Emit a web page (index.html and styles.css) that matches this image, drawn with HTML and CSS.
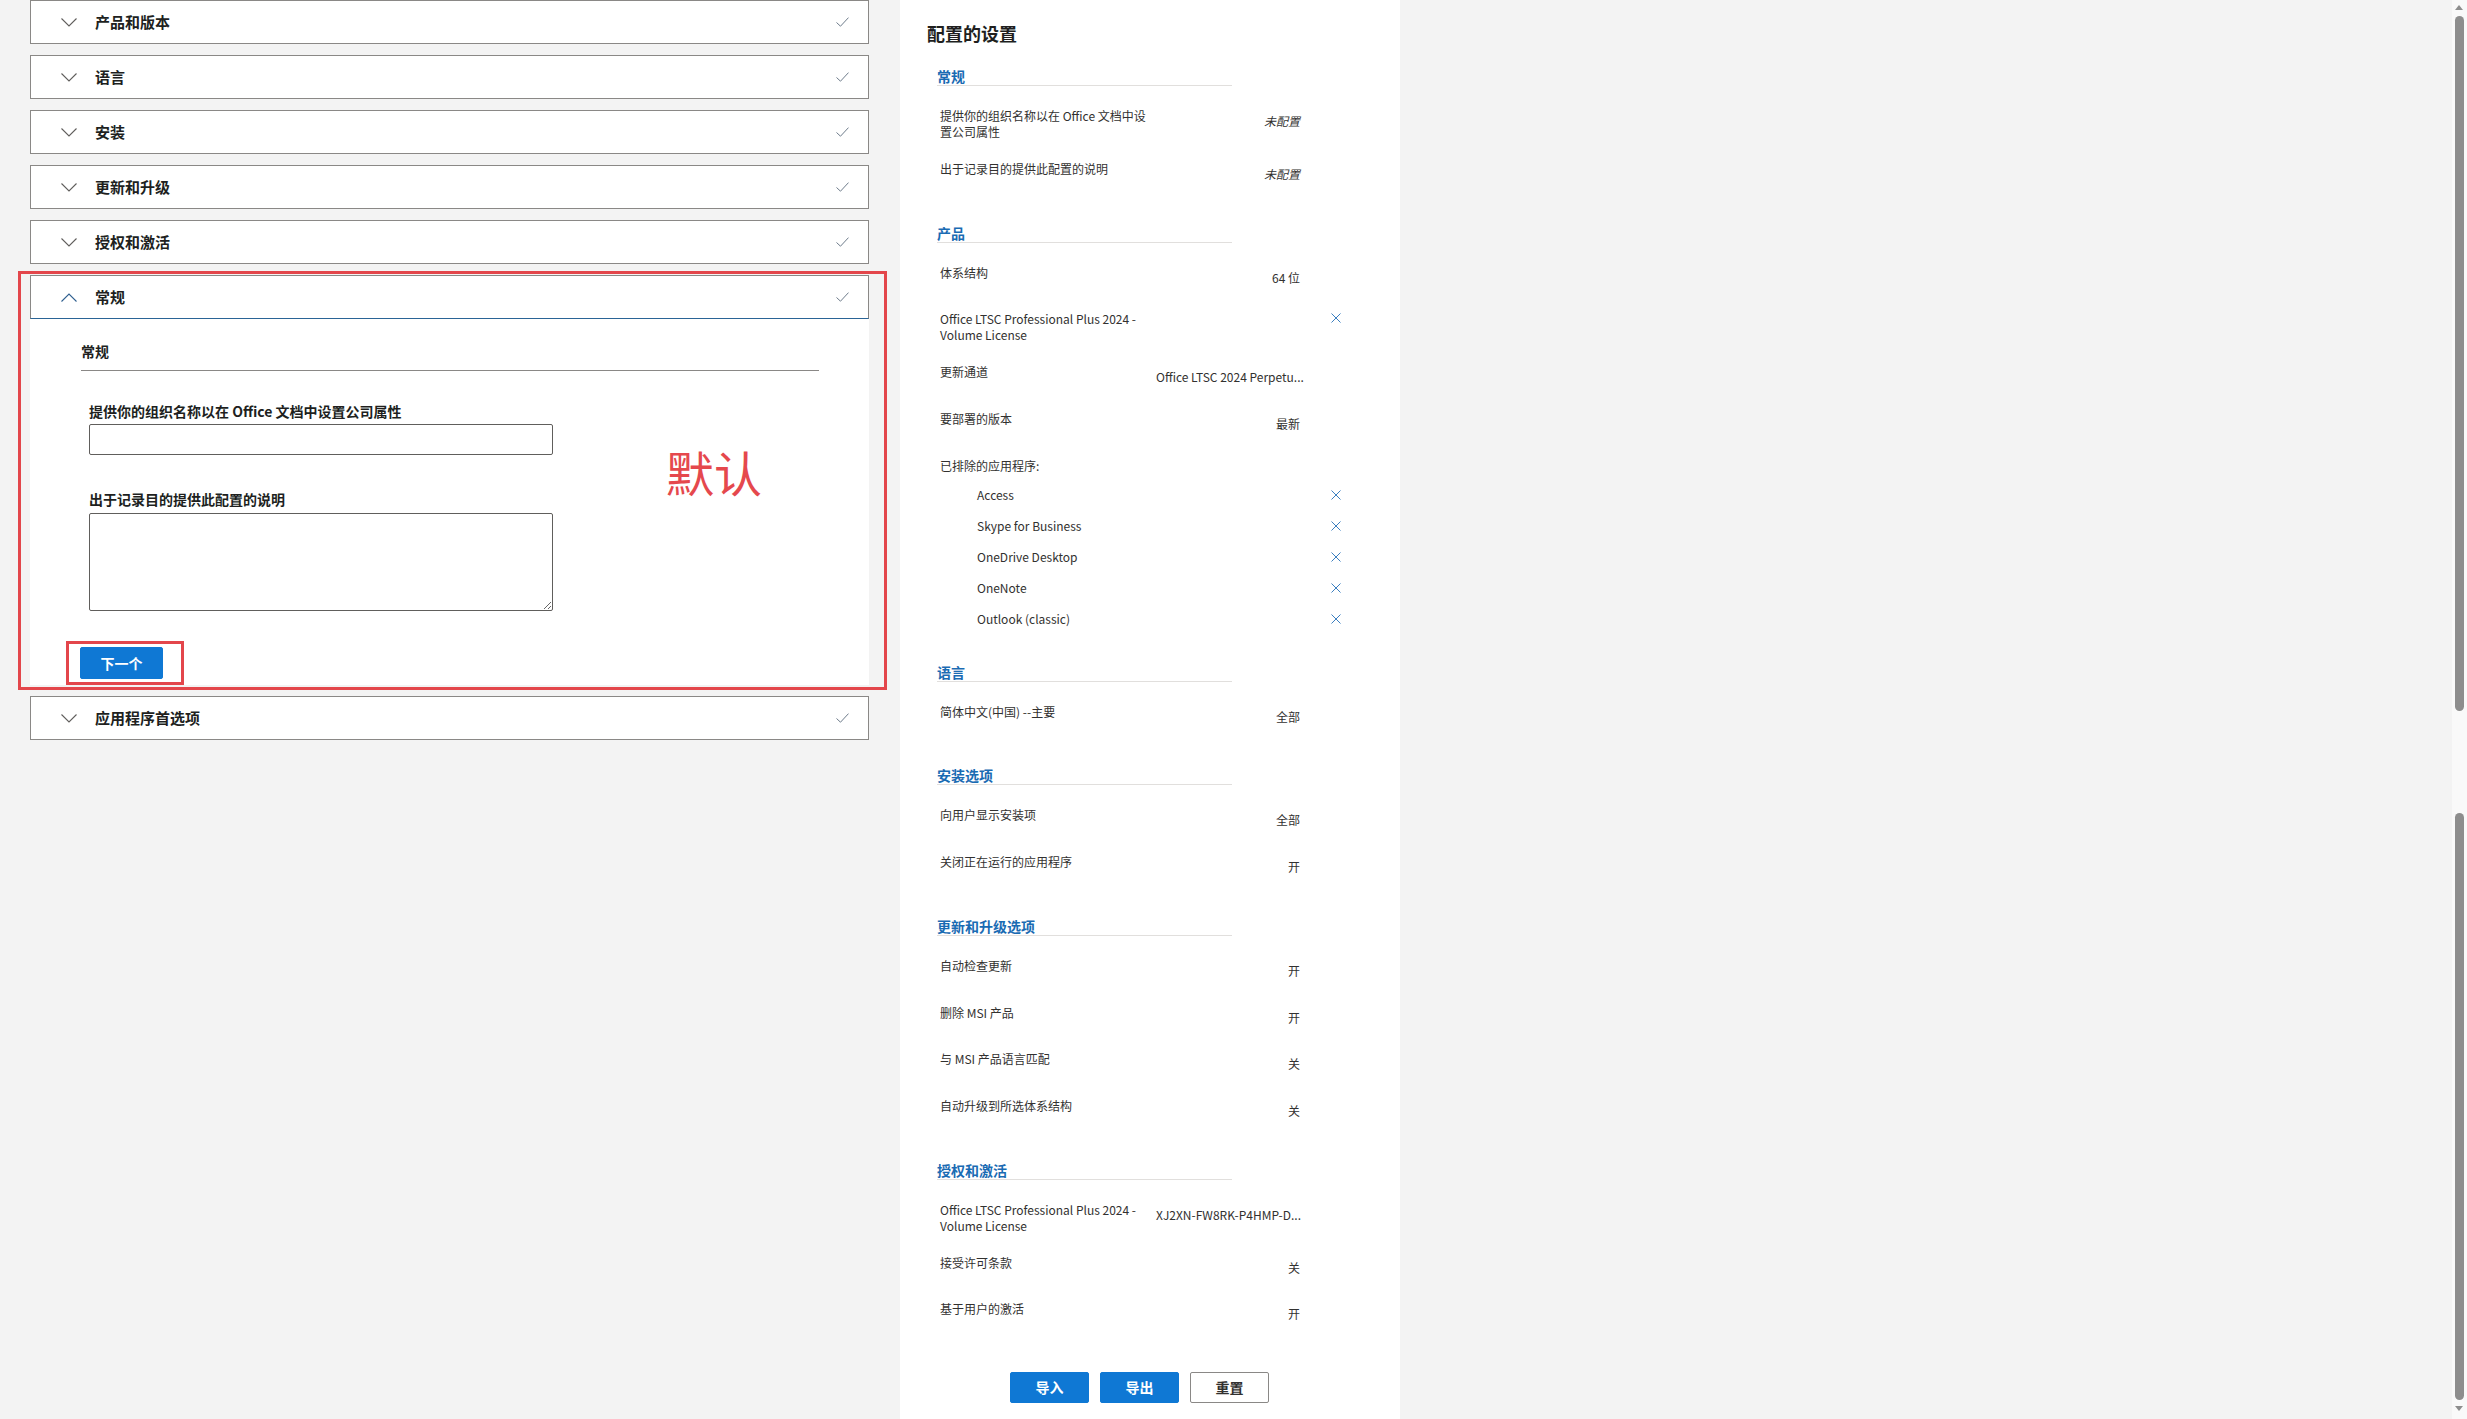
FILE: index.html
```html
<!DOCTYPE html>
<html lang="zh-CN">
<head>
<meta charset="utf-8">
<title>Office 自定义工具</title>
<link rel="stylesheet" href="styles.css">
</head>
<body>
<div class="page">
  <main class="wizard">
    <section class="acc">
      <div class="acc-head">
        <svg class="chev" width="16" height="9" viewBox="0 0 16 9"><path d="M0.5 0.5 L8 8 L15.5 0.5" fill="none" stroke="#605e5c" stroke-width="1.1"/></svg>
        <span class="acc-label">产品和版本</span>
        <svg class="check" width="13" height="10" viewBox="0 0 13 10"><path d="M0.5 5.5 L4.5 9.2 L12.5 0.6" fill="none" stroke="#6d7b8a" stroke-width="1"/></svg>
      </div>
    </section>
    <section class="acc">
      <div class="acc-head">
        <svg class="chev" width="16" height="9" viewBox="0 0 16 9"><path d="M0.5 0.5 L8 8 L15.5 0.5" fill="none" stroke="#605e5c" stroke-width="1.1"/></svg>
        <span class="acc-label">语言</span>
        <svg class="check" width="13" height="10" viewBox="0 0 13 10"><path d="M0.5 5.5 L4.5 9.2 L12.5 0.6" fill="none" stroke="#6d7b8a" stroke-width="1"/></svg>
      </div>
    </section>
    <section class="acc">
      <div class="acc-head">
        <svg class="chev" width="16" height="9" viewBox="0 0 16 9"><path d="M0.5 0.5 L8 8 L15.5 0.5" fill="none" stroke="#605e5c" stroke-width="1.1"/></svg>
        <span class="acc-label">安装</span>
        <svg class="check" width="13" height="10" viewBox="0 0 13 10"><path d="M0.5 5.5 L4.5 9.2 L12.5 0.6" fill="none" stroke="#6d7b8a" stroke-width="1"/></svg>
      </div>
    </section>
    <section class="acc">
      <div class="acc-head">
        <svg class="chev" width="16" height="9" viewBox="0 0 16 9"><path d="M0.5 0.5 L8 8 L15.5 0.5" fill="none" stroke="#605e5c" stroke-width="1.1"/></svg>
        <span class="acc-label">更新和升级</span>
        <svg class="check" width="13" height="10" viewBox="0 0 13 10"><path d="M0.5 5.5 L4.5 9.2 L12.5 0.6" fill="none" stroke="#6d7b8a" stroke-width="1"/></svg>
      </div>
    </section>
    <section class="acc">
      <div class="acc-head">
        <svg class="chev" width="16" height="9" viewBox="0 0 16 9"><path d="M0.5 0.5 L8 8 L15.5 0.5" fill="none" stroke="#605e5c" stroke-width="1.1"/></svg>
        <span class="acc-label">授权和激活</span>
        <svg class="check" width="13" height="10" viewBox="0 0 13 10"><path d="M0.5 5.5 L4.5 9.2 L12.5 0.6" fill="none" stroke="#6d7b8a" stroke-width="1"/></svg>
      </div>
    </section>
    <section class="acc open">
      <div class="acc-head">
        <svg class="chev" width="16" height="9" viewBox="0 0 16 9"><path d="M0.5 8.5 L8 1 L15.5 8.5" fill="none" stroke="#2f5f8f" stroke-width="1.1"/></svg>
        <span class="acc-label">常规</span>
        <svg class="check" width="13" height="10" viewBox="0 0 13 10"><path d="M0.5 5.5 L4.5 9.2 L12.5 0.6" fill="none" stroke="#6d7b8a" stroke-width="1"/></svg>
      </div>
      <div class="acc-body">
        <h3 class="body-title">常规</h3>
        <div class="field">
          <label class="field-label first">提供你的组织名称以在 Office 文档中设置公司属性</label>
          <input class="text-input" type="text">
        </div>
        <div class="field">
          <label class="field-label">出于记录目的提供此配置的说明</label>
          <textarea class="text-area"></textarea>
        </div>
        <button class="btn primary next">下一个</button>
      </div>
    </section>
    <section class="acc">
      <div class="acc-head">
        <svg class="chev" width="16" height="9" viewBox="0 0 16 9"><path d="M0.5 0.5 L8 8 L15.5 0.5" fill="none" stroke="#605e5c" stroke-width="1.1"/></svg>
        <span class="acc-label">应用程序首选项</span>
        <svg class="check" width="13" height="10" viewBox="0 0 13 10"><path d="M0.5 5.5 L4.5 9.2 L12.5 0.6" fill="none" stroke="#6d7b8a" stroke-width="1"/></svg>
      </div>
    </section>
  </main>

  <aside class="summary">
    <h2 class="summary-title">配置的设置</h2>

    <div class="sec first">
      <div class="sec-head">常规</div>
      <div class="row two"><span class="lbl">提供你的组织名称以在 Office 文档中设置公司属性</span><span class="val em">未配置</span></div>
      <div class="row"><span class="lbl">出于记录目的提供此配置的说明</span><span class="val em">未配置</span></div>
    </div>

    <div class="sec">
      <div class="sec-head">产品</div>
      <div class="row"><span class="lbl">体系结构</span><span class="val">64 位</span></div>
      <div class="row two"><span class="lbl">Office LTSC Professional Plus 2024 - Volume License</span><span class="val"></span><span class="x"><svg width="10" height="10" viewBox="0 0 10 10"><path d="M0.5 0.5 L9.5 9.5 M9.5 0.5 L0.5 9.5" stroke="#3b7fc0" stroke-width="1"/></svg></span></div>
      <div class="row"><span class="lbl">更新通道</span><span class="val">Office LTSC 2024 Perpetu...</span></div>
      <div class="row"><span class="lbl">要部署的版本</span><span class="val">最新</span></div>
      <div class="row subhead"><span class="lbl">已排除的应用程序:</span></div>
      <div class="items">
        <div class="row item"><span class="lbl">Access</span><span class="val"></span><span class="x"><svg width="10" height="10" viewBox="0 0 10 10"><path d="M0.5 0.5 L9.5 9.5 M9.5 0.5 L0.5 9.5" stroke="#3b7fc0" stroke-width="1"/></svg></span></div>
        <div class="row item"><span class="lbl">Skype for Business</span><span class="val"></span><span class="x"><svg width="10" height="10" viewBox="0 0 10 10"><path d="M0.5 0.5 L9.5 9.5 M9.5 0.5 L0.5 9.5" stroke="#3b7fc0" stroke-width="1"/></svg></span></div>
        <div class="row item"><span class="lbl">OneDrive Desktop</span><span class="val"></span><span class="x"><svg width="10" height="10" viewBox="0 0 10 10"><path d="M0.5 0.5 L9.5 9.5 M9.5 0.5 L0.5 9.5" stroke="#3b7fc0" stroke-width="1"/></svg></span></div>
        <div class="row item"><span class="lbl">OneNote</span><span class="val"></span><span class="x"><svg width="10" height="10" viewBox="0 0 10 10"><path d="M0.5 0.5 L9.5 9.5 M9.5 0.5 L0.5 9.5" stroke="#3b7fc0" stroke-width="1"/></svg></span></div>
        <div class="row item"><span class="lbl">Outlook (classic)</span><span class="val"></span><span class="x"><svg width="10" height="10" viewBox="0 0 10 10"><path d="M0.5 0.5 L9.5 9.5 M9.5 0.5 L0.5 9.5" stroke="#3b7fc0" stroke-width="1"/></svg></span></div>
      </div>
    </div>

    <div class="sec">
      <div class="sec-head">语言</div>
      <div class="row"><span class="lbl">简体中文(中国) --主要</span><span class="val">全部</span></div>
    </div>

    <div class="sec">
      <div class="sec-head">安装选项</div>
      <div class="row"><span class="lbl">向用户显示安装项</span><span class="val">全部</span></div>
      <div class="row"><span class="lbl">关闭正在运行的应用程序</span><span class="val">开</span></div>
    </div>

    <div class="sec">
      <div class="sec-head">更新和升级选项</div>
      <div class="row"><span class="lbl">自动检查更新</span><span class="val">开</span></div>
      <div class="row"><span class="lbl">删除 MSI 产品</span><span class="val">开</span></div>
      <div class="row"><span class="lbl">与 MSI 产品语言匹配</span><span class="val">关</span></div>
      <div class="row"><span class="lbl">自动升级到所选体系结构</span><span class="val">关</span></div>
    </div>

    <div class="sec">
      <div class="sec-head">授权和激活</div>
      <div class="row two"><span class="lbl">Office LTSC Professional Plus 2024 - Volume License</span><span class="val">XJ2XN-FW8RK-P4HMP-D...</span></div>
      <div class="row"><span class="lbl">接受许可条款</span><span class="val">关</span></div>
      <div class="row"><span class="lbl">基于用户的激活</span><span class="val">开</span></div>
    </div>

    <div class="actions">
      <button class="btn primary">导入</button>
      <button class="btn primary">导出</button>
      <button class="btn secondary">重置</button>
    </div>
  </aside>

  <div class="filler"></div>

  <div class="anno anno-big"></div>
  <div class="anno anno-small"></div>
  <div class="anno-text">默认</div>
</div>

<div class="scrollbar">
  <div class="sb-arrow up"></div>
  <div class="sb-thumb t1"></div>
  <div class="sb-thumb t2"></div>
  <div class="sb-arrow down"></div>
</div>
</body>
</html>
```

FILE: styles.css
```css
html, body {
  margin: 0;
  padding: 0;
  overflow: hidden;
}

body {
  font-family: "Noto Sans CJK SC", "Noto Sans", sans-serif;
  color: #323130;
  background: #f3f3f3;
}

.page {
  position: relative;
  display: flex;
  align-items: stretch;
  height: 1419px;
  background: #f3f3f3;
}

/* ---------- left wizard ---------- */
.wizard {
  width: 839px;
  margin-left: 30px;
  display: flex;
  flex-direction: column;
  gap: 11px;
}

.acc-head {
  box-sizing: border-box;
  height: 44px;
  display: flex;
  align-items: center;
  background: #fff;
  border: 1px solid #8a8886;
  padding-left: 30px;
  padding-right: 19px;
}

.chev {
  flex: none;
  display: block;
}

.acc-label {
  margin-left: 18px;
  font-size: 15px;
  font-weight: 700;
  color: #201f1e;
  line-height: 20px;
}

.check {
  margin-left: auto;
  display: block;
}

.acc.open .acc-head {
  border-bottom: 1px solid #2a6496;
}

.acc-body {
  background: #fff;
  padding: 22px 0 6px 51px;
}

.body-title {
  margin: 0;
  width: 738px;
  font-size: 14px;
  font-weight: 700;
  line-height: 20px;
  padding-bottom: 9px;
  border-bottom: 1px solid #8a8886;
  color: #201f1e;
}

.field {
  margin-left: 8px;
  display: flex;
  flex-direction: column;
  align-items: flex-start;
}

.field-label {
  display: block;
  margin-top: 34px;
  font-size: 14px;
  font-weight: 700;
  line-height: 20px;
  color: #201f1e;
}

.field-label.first {
  margin-top: 30px;
}

.text-input {
  box-sizing: border-box;
  margin: 3px 0 0 0;
  width: 464px;
  height: 31px;
  border: 1px solid #605e5c;
  border-radius: 2px;
  background: #fff;
  padding: 0 8px;
}

.text-area {
  box-sizing: border-box;
  margin: 4px 0 0 0;
  width: 464px;
  height: 98px;
  border: 1px solid #605e5c;
  border-radius: 2px;
  background: #fff;
  padding: 6px 8px;
  display: block;
}

.btn {
  box-sizing: border-box;
  font-family: "Noto Sans CJK SC", "Noto Sans", sans-serif;
  font-size: 14px;
  font-weight: 700;
  border-radius: 2px;
  cursor: pointer;
  padding: 0;
}

.btn.primary {
  background: #0f78d4;
  border: 1px solid #0f78d4;
  color: #fff;
}

.btn.secondary {
  background: #fff;
  border: 1px solid #8a8886;
  color: #323130;
}

.next {
  margin-top: 36px;
  margin-left: -1px;
  width: 83px;
  height: 32px;
  display: block;
}

/* ---------- right summary ---------- */
.summary {
  box-sizing: border-box;
  width: 500px;
  margin-left: 31px;
  background: #fff;
  padding: 21px 0 0 27px;
  flex: none;
}

.summary-title {
  margin: 0;
  font-size: 18px;
  font-weight: 700;
  line-height: 24px;
  color: #201f1e;
}

.sec {
  margin-left: 10px;
  margin-top: 25px;
}

.sec.first {
  margin-top: 22px;
}

.sec-head {
  width: 295px;
  font-size: 14px;
  font-weight: 700;
  line-height: 18px;
  color: #1a6bb3;
  border-bottom: 1px solid #e1dfdd;
  margin-bottom: 13px;
}

.row {
  box-sizing: border-box;
  display: grid;
  grid-template-columns: 216px 144px 50px;
  align-items: start;
  min-height: 46.7px;
  padding: 9px 0 12px 3px;
  font-size: 12px;
  line-height: 16px;
  color: #323130;
}

.lbl {
  display: block;
}

.val {
  display: block;
  text-align: right;
  padding-top: 5px;
  white-space: nowrap;
  overflow: visible;
}

.val.em {
  font-style: italic;
}

.x {
  padding-left: 31px;
  padding-top: 2px;
  line-height: 0;
}

.x svg {
  display: block;
}

.row.subhead {
  min-height: 30px;
  padding-bottom: 0;
}

.items {
  padding-bottom: 4px;
}

.row.item {
  grid-template-columns: 179px 144px 50px;
  min-height: 31px;
  padding: 8px 0 0 40px;
}

.row.item .x {
  padding-top: 3px;
}

.actions {
  display: flex;
  gap: 11px;
  margin-top: 33px;
  padding-left: 83px;
}

.actions .btn {
  width: 79px;
  height: 31px;
}

.filler {
  flex: 1;
}

/* ---------- annotations ---------- */
.anno {
  position: absolute;
  box-sizing: border-box;
  border: 3px solid #e3464b;
  pointer-events: none;
}

.anno-big {
  left: 18px;
  top: 271px;
  width: 869px;
  height: 419px;
}

.anno-small {
  left: 66px;
  top: 641px;
  width: 118px;
  height: 44px;
}

.anno-text {
  position: absolute;
  left: 666px;
  top: 446px;
  font-size: 48px;
  line-height: 50px;
  color: #e5484d;
  font-weight: 400;
}

/* ---------- scrollbar ---------- */
.scrollbar {
  position: fixed;
  right: 0;
  top: 0;
  width: 15px;
  height: 1419px;
  background: #f9f9f9;
}

.sb-thumb {
  position: absolute;
  left: 3px;
  width: 9px;
  background: #8d8d8d;
  border-radius: 5px;
}

.t1 {
  top: 16px;
  height: 695px;
}

.t2 {
  top: 813px;
  height: 587px;
}

.sb-arrow {
  position: absolute;
  left: 3px;
  width: 0;
  height: 0;
  border-left: 4.5px solid transparent;
  border-right: 4.5px solid transparent;
}

.sb-arrow.up {
  top: 5px;
  border-bottom: 5px solid #8d8d8d;
}

.sb-arrow.down {
  top: 1406px;
  border-top: 5px solid #8d8d8d;
}
```
